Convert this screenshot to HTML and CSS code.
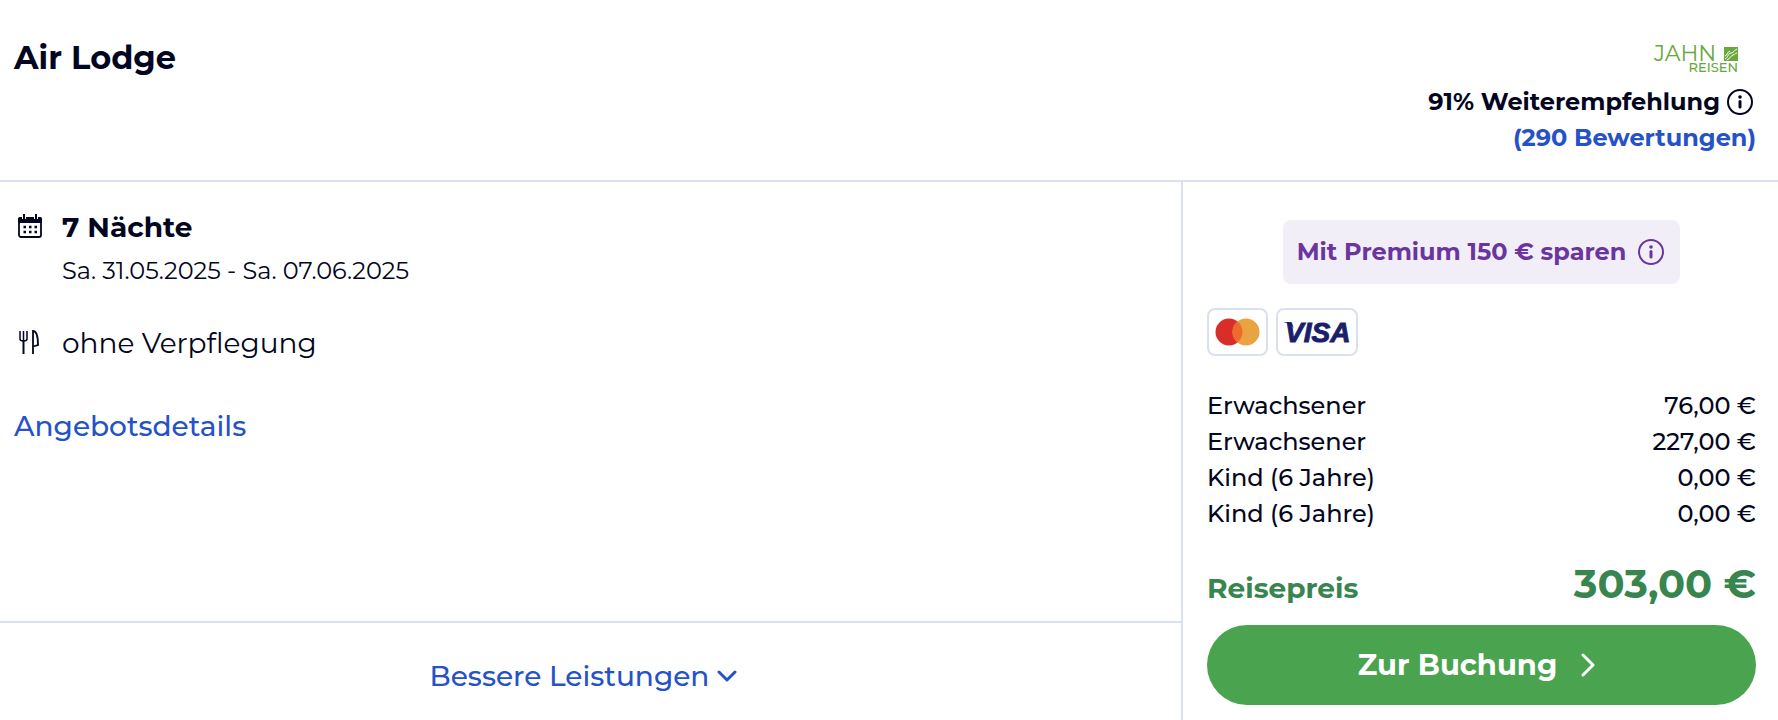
FILE: index.html
```
<!DOCTYPE html>
<html lang="de">
<head>
    <meta charset="UTF-8">
    <meta name="viewport" content="width=device-width, initial-scale=1.0">
    <title>Air Lodge</title>
    <link rel="stylesheet" href="styles.css">
</head>
<body>
    <article class="offer">
        <header class="offer-header">
            <h1>Air Lodge</h1>
            <div class="rating">
                <svg class="operator-logo" viewBox="0 0 84 26" role="img" aria-label="Jahn Reisen">
                    <text class="logo-name" x="0" y="15">JAHN</text>
                    <text class="logo-sub" x="84" y="26" text-anchor="end">REISEN</text>
                    <rect x="70" y="1" width="14" height="14" fill="#69a83c"/>
                    <path d="M71 13c3-1 3-6 6-6s3-3 6-4M73 14c3-1 3-4 6-5s2-2 4-2M71 10c2 0 2-4 5-5" fill="none" stroke="#fff"/>
                </svg>
                <div class="rating-line">
                    <strong>91% Weiterempfehlung</strong>
                    <button class="info" type="button" aria-label="Info zur Weiterempfehlung">
                        <svg viewBox="0 0 26 26"><circle cx="13" cy="13" r="12"/><path d="M13 12.500v5.500"/><circle class="dot" cx="13" cy="8" r="1.800"/></svg>
                    </button>
                </div>
                <a class="reviews" href="#bewertungen">(290 Bewertungen)</a>
            </div>
        </header>

        <div class="offer-body">
            <section class="details">
                <div class="detail">
                    <svg class="icon" viewBox="0 0 24 24">
                        <rect x="1" y="4" width="22" height="19" rx="2" fill="none" stroke="currentColor" stroke-width="1.800"/>
                        <path d="M0 9V5q0-2 2-2h20q2 0 2 2v4z" fill="currentColor"/>
                        <path d="M6 1v4M18 1v4" stroke="#fff" stroke-width="4"/>
                        <path d="M6 0v5M18 0v5" stroke="currentColor" stroke-width="2"/>
                        <path d="M5.500 13h2.500M11 13h2.500M16.500 13h2.500M5.500 18h2.500M11 18h2.500M16.500 18h2.500" stroke="currentColor" stroke-width="2.500"/>
                    </svg>
                    <div>
                        <h2>7 Nächte</h2>
                        <p class="dates">Sa. 31.05.2025 - Sa. 07.06.2025</p>
                    </div>
                </div>
                <div class="detail">
                    <svg class="icon" viewBox="0 0 24 24" fill="none" stroke="currentColor">
                        <path d="M2 1v8q0 2 3.500 2T9 9V1M5.500 1v10" stroke-width="1.500"/>
                        <path d="M5.500 10v14" stroke-width="2"/>
                        <path d="M15 24V1q5 0 5 14l-5 1.500" stroke-width="1.800"/>
                    </svg>
                    <p class="board">ohne Verpflegung</p>
                </div>
                <a class="details-link" href="#angebotsdetails">Angebotsdetails</a>
            </section>

            <div class="upgrade">
                <button class="upgrade-button" type="button">
                    Bessere Leistungen
                    <svg class="chevron-down" viewBox="0 0 20 12"><path d="M2 2l8 8 8-8"/></svg>
                </button>
            </div>

            <aside class="booking">
                <div class="premium">
                    <span>Mit Premium 150 € sparen</span>
                    <button class="info" type="button" aria-label="Info zu Premium">
                        <svg viewBox="0 0 26 26"><circle cx="13" cy="13" r="12"/><path d="M13 12.500v5.500"/><circle class="dot" cx="13" cy="8" r="1.800"/></svg>
                    </button>
                </div>

                <div class="cards">
                    <div class="card">
                        <svg width="45" height="28" viewBox="0 0 45 28" role="img" aria-label="Mastercard">
                            <circle cx="14" cy="14" r="13.500" fill="#d92d2a"/>
                            <circle cx="31" cy="14" r="13.500" fill="#e9a340"/>
                            <path d="M22.500 3.500a13.500 13.500 0 0 1 0 21a13.500 13.500 0 0 1 0-21z" fill="#ee6b2d"/>
                        </svg>
                    </div>
                    <div class="card">
                        <svg width="70" height="28" viewBox="0 0 70 28" role="img" aria-label="Visa">
                            <path d="M1 4h8l3 6Q8 5 1 4z" fill="#1b1f6b"/>
                            <text class="visa-text" x="3" y="24">VISA</text>
                        </svg>
                    </div>
                </div>

                <table class="prices">
                    <tbody>
                        <tr><th scope="row">Erwachsener</th><td>76,00 €</td></tr>
                        <tr><th scope="row">Erwachsener</th><td>227,00 €</td></tr>
                        <tr><th scope="row">Kind (6 Jahre)</th><td>0,00 €</td></tr>
                        <tr><th scope="row">Kind (6 Jahre)</th><td>0,00 €</td></tr>
                    </tbody>
                </table>

                <div class="total">
                    <span class="total-label">Reisepreis</span>
                    <strong class="total-price">303,00 €</strong>
                </div>

                <button class="book-button" type="button">
                    Zur Buchung
                    <svg class="chevron-right" viewBox="0 0 14 24"><path d="M2 2l10 10L2 22"/></svg>
                </button>
            </aside>
        </div>
    </article>
</body>
</html>
```
FILE: styles.css
```
* {
    box-sizing: border-box;
}
body {
    margin: 0;
    font-family: Montserrat, Inter, sans-serif;
    font-size: 24px;
    line-height: 36px;
    color: #020621;
    background-color: white;
}
h1, h2, p {
    margin: 0;
}
strong {
    font-weight: 700;
}
button {
    border: 0;
    padding: 0;
    background: none;
    font: inherit;
    color: inherit;
    cursor: pointer;
}
a {
    color: #2552c8;
    text-decoration: none;
}
a:hover {
    text-decoration: underline;
}
.offer {
    display: flex;
    flex-direction: column;
    min-height: 100vh;
}

/* Header */
.offer-header {
    display: flex;
    justify-content: space-between;
    padding: 40px 22px 24px 14px;
    border-bottom: 2px solid #dbe0ee;
}
h1 {
    font-size: 32px;
    font-weight: 700;
}
.rating {
    display: flex;
    flex-direction: column;
    align-items: flex-end;
    padding-top: 6px;
}
.operator-logo {
    width: 84px;
    height: 26px;
    margin: 0 18px 12px 0;
    overflow: visible;
}
.logo-name {
    font-size: 22px;
    fill: #69a83c;
}
.logo-sub {
    font-size: 13px;
    font-weight: 500;
    fill: #69a83c;
}
.rating-line {
    display: flex;
    align-items: center;
    gap: 7px;
    padding-right: 3px;
}
.reviews {
    font-weight: 700;
}
.info {
    display: flex;
}
.info svg {
    width: 26px;
    height: 26px;
    fill: none;
    stroke: currentColor;
    stroke-width: 2;
    stroke-linecap: round;
}
.info path {
    stroke-width: 3;
}
.info .dot {
    fill: currentColor;
    stroke: none;
}

/* Body */
.offer-body {
    display: grid;
    flex: 1;
    grid-template-columns: minmax(0, 1fr) 597px;
    grid-template-rows: 1fr 99px;
}
.details {
    padding: 27px 14px;
}
.detail {
    display: flex;
    gap: 20px;
    margin-bottom: 36px;
}
.icon {
    flex: none;
    width: 24px;
    height: 24px;
    margin: 5px 0 0 4px;
}
h2 {
    margin-bottom: 8px;
    font-size: 28px;
    font-weight: 700;
}
.board, .details-link {
    font-size: 28px;
}
.details-link {
    display: inline-block;
    margin-top: 11px;
    font-weight: 500;
}
.upgrade {
    display: flex;
    align-items: center;
    justify-content: center;
    padding: 8px 14px 0 0;
    border-top: 2px solid #dbe0ee;
}
.upgrade-button {
    display: flex;
    align-items: center;
    gap: 8px;
    font-size: 28px;
    font-weight: 500;
    color: #2552c8;
}
.chevron-down, .chevron-right {
    fill: none;
    stroke: currentColor;
    stroke-width: 3;
    stroke-linecap: round;
    stroke-linejoin: round;
}
.chevron-down {
    width: 20px;
    height: 12px;
}
.chevron-right {
    width: 14px;
    height: 24px;
}

/* Booking column */
.booking {
    display: flex;
    grid-column: 2;
    grid-row: 1 / span 2;
    flex-direction: column;
    padding: 38px 22px 15px 24px;
    border-left: 2px solid #dbe0ee;
}
.premium {
    display: flex;
    align-items: center;
    align-self: center;
    gap: 12px;
    padding: 14px 16px 14px 14px;
    border-radius: 8px;
    background-color: #f2eef7;
    font-weight: 700;
    color: #6b359e;
}
.cards {
    display: flex;
    gap: 8px;
    margin: 24px 0 32px;
}
.card {
    display: flex;
    align-items: center;
    height: 48px;
    padding: 0 6px;
    border: 2px solid #dbe0ee;
    border-radius: 8px;
}
.card:last-child {
    padding: 0 4px;
}
.visa-text {
    font-family: "Liberation Sans", sans-serif;
    font-size: 28px;
    font-style: italic;
    font-weight: 700;
    fill: #1b1f6b;
    stroke: #1b1f6b;
}
.prices {
    width: 100%;
    border-collapse: collapse;
}
.prices th, .prices td {
    padding: 0;
    font-weight: 500;
    text-align: left;
}
.prices td {
    text-align: right;
}
.total {
    display: flex;
    align-items: baseline;
    justify-content: space-between;
    margin-top: auto;
    margin-bottom: 17px;
    font-weight: 700;
    color: #38854f;
}
.total-label {
    font-size: 28px;
}
.total-price {
    font-size: 40px;
    line-height: 48px;
}
.book-button {
    display: flex;
    align-items: center;
    justify-content: center;
    gap: 24px;
    height: 80px;
    padding-right: 10px;
    border-radius: 40px;
    background-color: #4aa44f;
    font-size: 29px;
    font-weight: 700;
    color: white;
}
```
